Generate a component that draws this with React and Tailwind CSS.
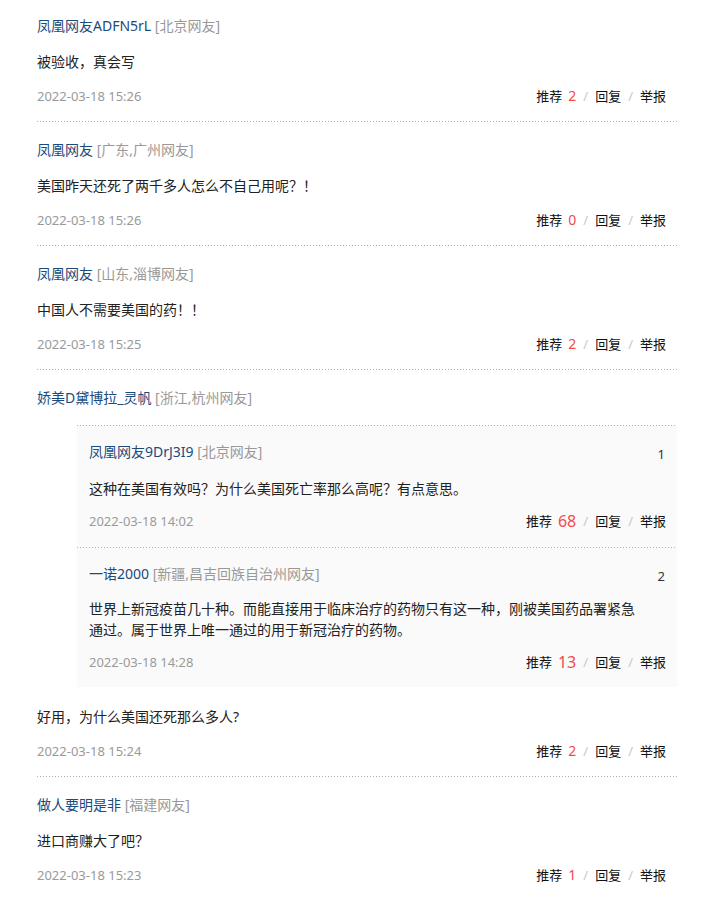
import React from "react";

const FONT = { fontFamily: '"Noto Sans", "Noto Sans CJK SC", sans-serif' };

function Dots() {
  return (
    <div className="h-px bg-[repeating-linear-gradient(to_right,#b0b0b0_0px,#b0b0b0_1px,transparent_1px,transparent_3px)]" />
  );
}

function Name({ name, loc }) {
  return (
    <div className="text-[14px] leading-5 whitespace-nowrap">
      <span className="text-[#1b4a7c]">{name}</span>{" "}
      <span className="text-[#999]">[{loc}]</span>
    </div>
  );
}

function Meta({ date, num, big }) {
  return (
    <div className="flex items-center justify-between h-5 pr-[11px]">
      <span className="text-[13px] text-[#9a9a9a] leading-5">{date}</span>
      <div className="flex items-center h-5 text-[13px] text-[#111] leading-5">
        <span>推荐</span>
        <span
          className={
            big
              ? "ml-[6px] text-[16px] text-[#f44a4a] leading-5"
              : "ml-[6px] text-[14px] text-[#f44a4a] leading-5"
          }
        >
          {num}
        </span>
        <span className="mx-[7px] text-[#c8c8c8]">/</span>
        <span>回复</span>
        <span className="mx-[7px] text-[#c8c8c8]">/</span>
        <span>举报</span>
      </div>
    </div>
  );
}

function Item({ name, loc, text, date, num, first, last, children }) {
  return (
    <div>
      <div className={first ? "pt-4" : "pt-[18px]"}>
        <Name name={name} loc={loc} />
        {children}
        <div
          className={
            children
              ? "mt-5 text-[14px] leading-5 text-[#222]"
              : "mt-4 text-[14px] leading-5 text-[#222]"
          }
        >
          {text}
        </div>
        <div className="mt-[14px] pb-[15px]">
          <Meta date={date} num={num} />
        </div>
      </div>
      {!last && <Dots />}
    </div>
  );
}

function Reply({ name, loc, idx, text, date, num, textMt, dateMt, pb }) {
  return (
    <div>
      <Dots />
      <div className={"pt-4 pl-3 " + pb}>
        <div className="flex items-center justify-between h-5 pr-3">
          <Name name={name} loc={loc} />
          <span className="text-[13px] text-[#333] leading-5 translate-y-[2px]">{idx}</span>
        </div>
        <div className={textMt + " max-w-[552px] text-[14px] leading-[21px] text-[#222]"}>
          {text}
        </div>
        <div className={dateMt}>
          <Meta date={date} num={num} big />
        </div>
      </div>
    </div>
  );
}

export default function App() {
  return (
    <div className="w-[722px] bg-white pl-[37px] pr-[45px] pb-4" style={FONT}>
      <Item
        first
        name="凤凰网友ADFN5rL"
        loc="北京网友"
        text="被验收，真会写"
        date="2022-03-18 15:26"
        num="2"
      />
      <Item
        name="凤凰网友"
        loc="广东,广州网友"
        text="美国昨天还死了两千多人怎么不自己用呢？！"
        date="2022-03-18 15:26"
        num="0"
      />
      <Item
        name="凤凰网友"
        loc="山东,淄博网友"
        text="中国人不需要美国的药！！"
        date="2022-03-18 15:25"
        num="2"
      />
      <Item
        name="娇美D黛博拉_灵帆"
        loc="浙江,杭州网友"
        text="好用，为什么美国还死那么多人?"
        date="2022-03-18 15:24"
        num="2"
      >
        <div className="mt-[17px] ml-10 bg-[#fafafa]">
          <Reply
            name="凤凰网友9DrJ3I9"
            loc="北京网友"
            idx="1"
            text="这种在美国有效吗？为什么美国死亡率那么高呢？有点意思。"
            date="2022-03-18 14:02"
            num="68"
            textMt="mt-4"
            dateMt="mt-3"
            pb="pb-4"
          />
          <Reply
            name="一诺2000"
            loc="新疆,昌吉回族自治州网友"
            idx="2"
            text="世界上新冠疫苗几十种。而能直接用于临床治疗的药物只有这一种，刚被美国药品署紧急通过。属于世界上唯一通过的用于新冠治疗的药物。"
            date="2022-03-18 14:28"
            num="13"
            textMt="mt-[14px]"
            dateMt="mt-3"
            pb="pb-[15px]"
          />
        </div>
      </Item>
      <Item
        last
        name="做人要明是非"
        loc="福建网友"
        text="进口商赚大了吧？"
        date="2022-03-18 15:23"
        num="1"
      />
    </div>
  );
}
